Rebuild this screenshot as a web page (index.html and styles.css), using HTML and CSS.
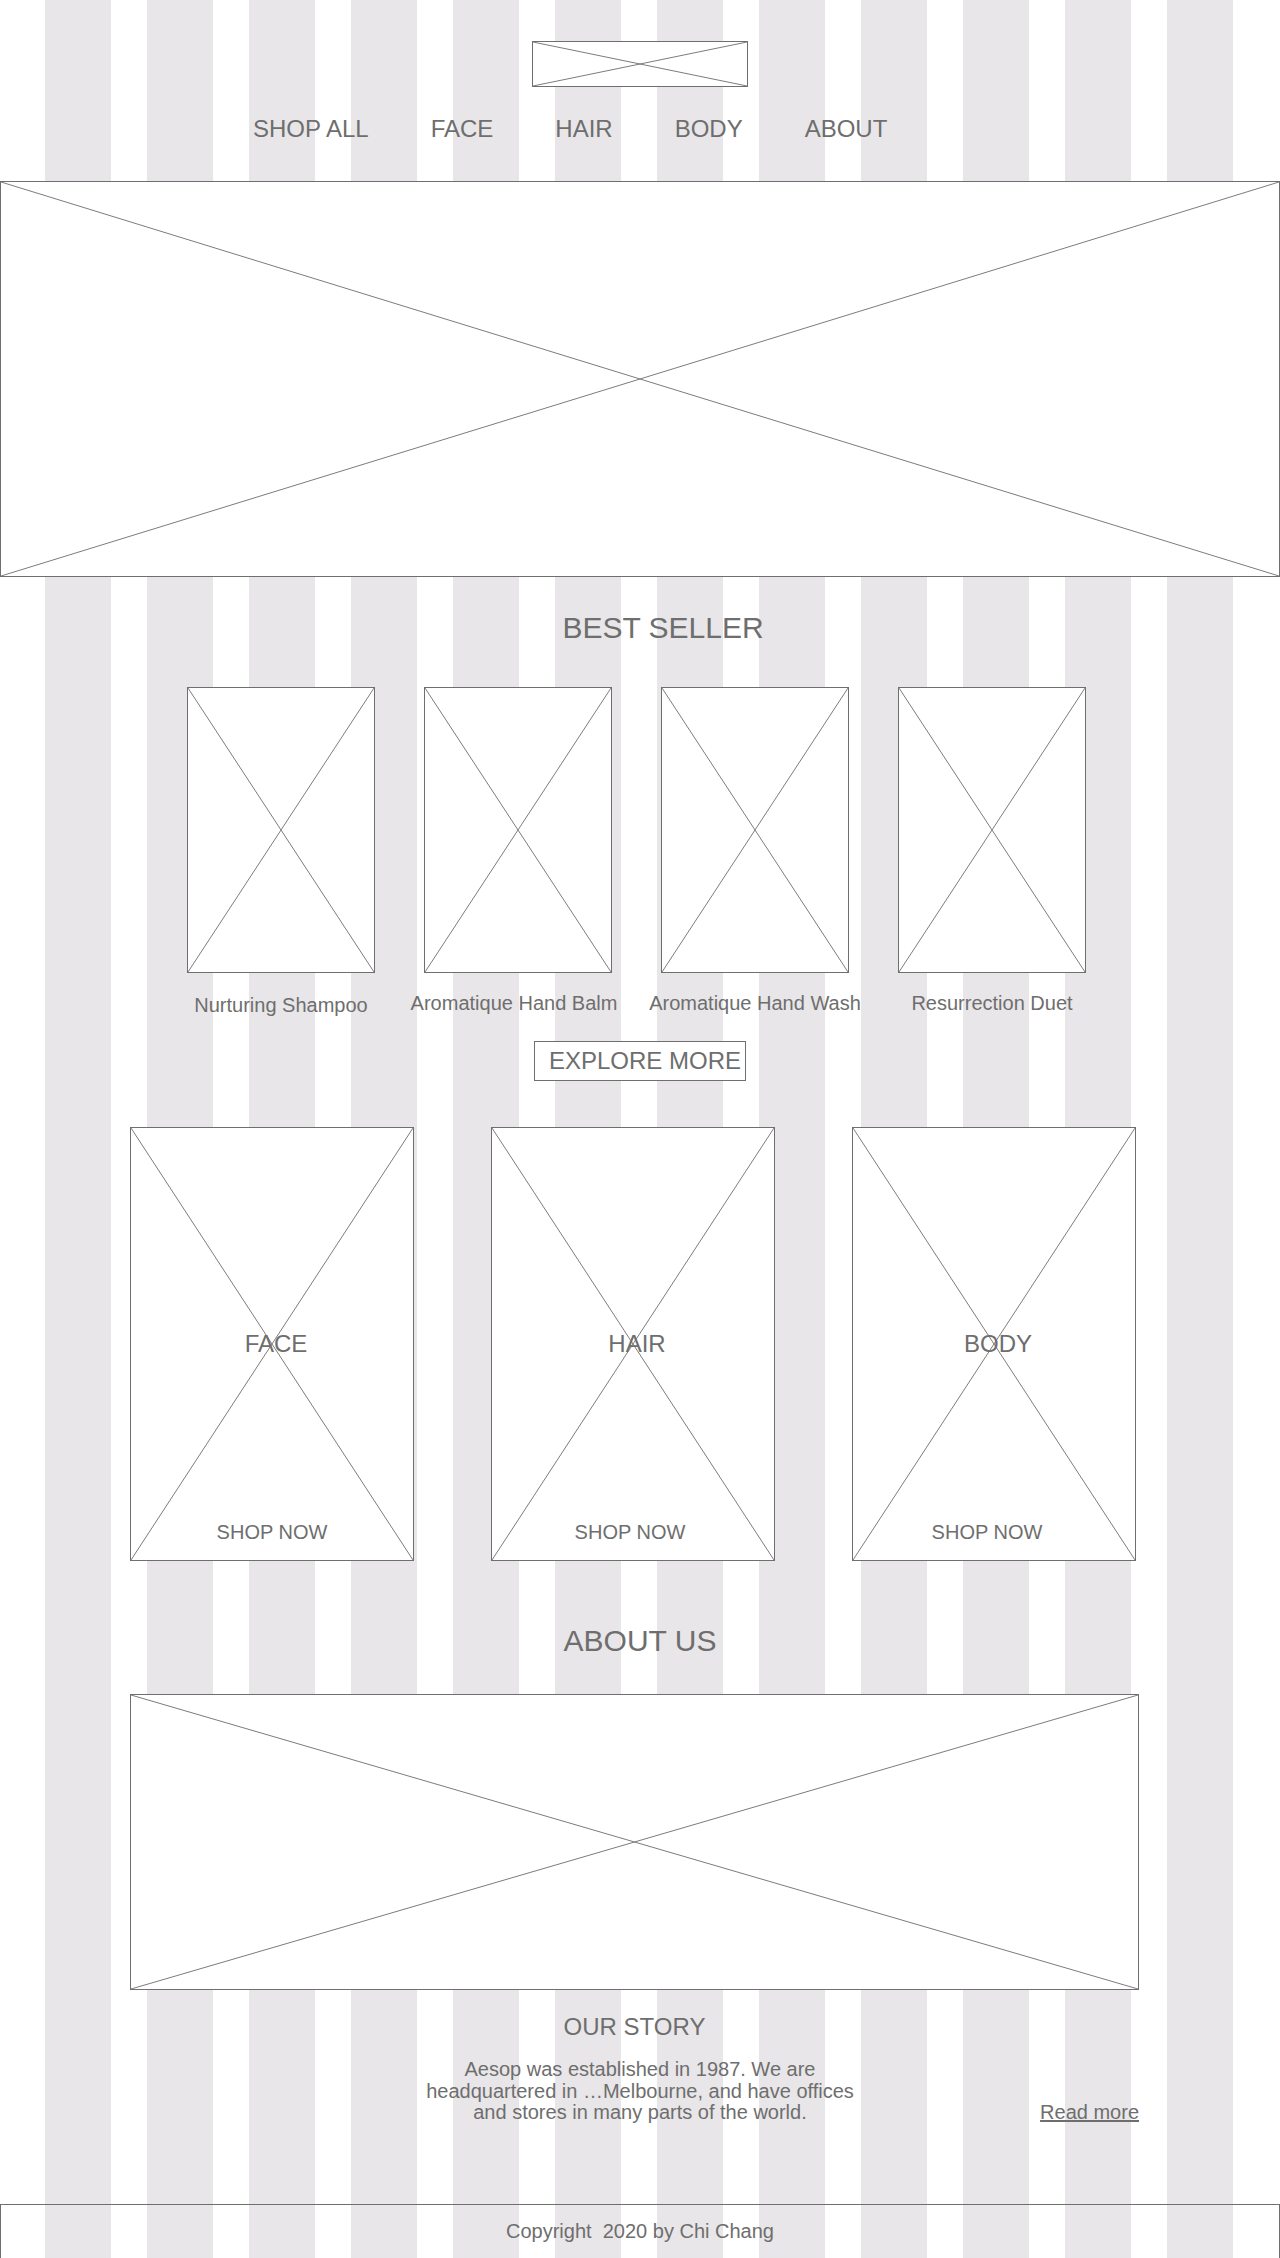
FILE: index.html
```html
<!DOCTYPE html>
<html lang="en">
<head>
  <meta charset="UTF-8">
  <title>Aesop Wireframe</title>
  <link rel="stylesheet" href="styles.css">
</head>
<body>
  <header class="site-header">
    <div class="ph logo">
      <svg class="x"><line x1="0" y1="0" x2="100%" y2="100%"/><line x1="0" y1="100%" x2="100%" y2="0"/></svg>
    </div>
    <nav class="main-nav">
      <a href="#">SHOP ALL</a>
      <a href="#">FACE</a>
      <a href="#">HAIR</a>
      <a href="#">BODY</a>
      <a href="#">ABOUT</a>
    </nav>
  </header>

  <div class="ph hero">
    <svg class="x"><line x1="0" y1="0" x2="100%" y2="100%"/><line x1="0" y1="100%" x2="100%" y2="0"/></svg>
  </div>

  <section class="best-seller">
    <h2 class="section-title best-title">BEST SELLER</h2>
    <div class="product-row">
      <div class="product">
        <div class="ph product-img">
          <svg class="x"><line x1="0" y1="0" x2="100%" y2="100%"/><line x1="0" y1="100%" x2="100%" y2="0"/></svg>
        </div>
        <p class="product-name low">Nurturing Shampoo</p>
      </div>
      <div class="product">
        <div class="ph product-img">
          <svg class="x"><line x1="0" y1="0" x2="100%" y2="100%"/><line x1="0" y1="100%" x2="100%" y2="0"/></svg>
        </div>
        <p class="product-name nudge-left">Aromatique Hand Balm</p>
      </div>
      <div class="product">
        <div class="ph product-img">
          <svg class="x"><line x1="0" y1="0" x2="100%" y2="100%"/><line x1="0" y1="100%" x2="100%" y2="0"/></svg>
        </div>
        <p class="product-name">Aromatique Hand Wash</p>
      </div>
      <div class="product">
        <div class="ph product-img">
          <svg class="x"><line x1="0" y1="0" x2="100%" y2="100%"/><line x1="0" y1="100%" x2="100%" y2="0"/></svg>
        </div>
        <p class="product-name">Resurrection Duet</p>
      </div>
    </div>
    <a href="#" class="explore-btn">EXPLORE MORE</a>
  </section>

  <section class="categories wrap">
    <div class="ph card">
      <svg class="x"><line x1="0" y1="0" x2="100%" y2="100%"/><line x1="0" y1="100%" x2="100%" y2="0"/></svg>
      <span class="card-title">FACE</span>
      <a href="#" class="card-link">SHOP NOW</a>
    </div>
    <div class="ph card">
      <svg class="x"><line x1="0" y1="0" x2="100%" y2="100%"/><line x1="0" y1="100%" x2="100%" y2="0"/></svg>
      <span class="card-title">HAIR</span>
      <a href="#" class="card-link shift-1">SHOP NOW</a>
    </div>
    <div class="ph card">
      <svg class="x"><line x1="0" y1="0" x2="100%" y2="100%"/><line x1="0" y1="100%" x2="100%" y2="0"/></svg>
      <span class="card-title">BODY</span>
      <a href="#" class="card-link shift-2">SHOP NOW</a>
    </div>
  </section>

  <section class="about">
    <h2 class="section-title about-title">ABOUT US</h2>
    <div class="wrap">
      <div class="ph about-img">
        <svg class="x"><line x1="0" y1="0" x2="100%" y2="100%"/><line x1="0" y1="100%" x2="100%" y2="0"/></svg>
      </div>
      <h3 class="story-title">OUR STORY</h3>
    </div>
    <div class="story-row">
      <p class="story-text">Aesop was established in 1987. We are headquartered in …Melbourne, and have offices and stores in many parts of the world.</p>
      <a href="#" class="read-more">Read more</a>
    </div>
  </section>

  <footer class="site-footer">Copyright&nbsp; 2020 by Chi Chang</footer>
</body>
</html>
```

FILE: styles.css
```css
html {
  background: #fff;
}
body {
  margin: 0;
  min-height: 2258px;
  font-family: 'Liberation Sans', Arial, sans-serif;
  color: #6e6e6e;
  background-image: repeating-linear-gradient(to right, #e8e6e8 0 66px, #fff 66px 102px);
  background-size: 1188px 100%;
  background-position: 45px 0;
  background-repeat: no-repeat;
}
a {
  color: #6e6e6e;
  text-decoration: none;
}
h2, h3, p {
  margin: 0;
  font-weight: normal;
}

/* placeholder boxes with the big X */
.ph {
  position: relative;
  box-sizing: border-box;
  border: 1px solid #6f6f6f;
  background: #fff;
}
.x {
  position: absolute;
  left: 0;
  top: 0;
  width: 100%;
  height: 100%;
}
.x line {
  stroke: #7c7c7c;
  stroke-width: 1;
}

.wrap {
  width: 1009px;
  margin-left: 130px;
}

/* header */
.site-header {
  padding-top: 41px;
}
.logo {
  width: 216px;
  height: 46px;
  margin: 0 auto;
  border-width: 1.5px;
}
.main-nav {
  display: flex;
  gap: 62px;
  margin: 28px 0 0 253px;
  font-size: 24px;
  line-height: 28px;
}

.hero {
  margin-top: 38px;
  height: 396px;
}

/* best seller */
.section-title {
  font-size: 30px;
  line-height: 34px;
  text-align: center;
}
.best-title {
  margin-top: 34px;
  padding-left: 46px;
}
.product-row {
  display: flex;
  gap: 49px;
  margin: 42px 0 0 187px;
}
.product {
  width: 188px;
}
.product-img {
  height: 286px;
}
.product-name {
  margin: 19px -30px 0 -30px;
  font-size: 20px;
  line-height: 23px;
  text-align: center;
  white-space: nowrap;
}
.product-name.low {
  margin-top: 21px;
}
.product-name.nudge-left {
  margin-left: -34px;
  margin-right: -26px;
}
.explore-btn {
  display: block;
  box-sizing: border-box;
  width: 212px;
  height: 40px;
  margin: 24px auto 0 auto;
  padding-left: 14px;
  border: 1px solid #6f6f6f;
  background: #fff;
  font-size: 24px;
  line-height: 38px;
}

/* categories */
.categories {
  display: flex;
  gap: 77px;
  margin-top: 46px;
}
.card {
  width: 284px;
  height: 434px;
  display: grid;
  grid-template-rows: 1fr auto 1fr;
  justify-items: center;
}
.card-title {
  position: relative;
  grid-row: 2;
  padding-left: 8px;
  font-size: 24px;
  line-height: 28px;
}
.card-link {
  position: relative;
  grid-row: 3;
  align-self: end;
  padding-bottom: 16px;
  font-size: 20px;
  line-height: 23px;
}
.card-link.shift-1 {
  margin-right: 6px;
}
.card-link.shift-2 {
  margin-right: 14px;
}

/* about */
.about-title {
  margin-top: 63px;
}
.about-img {
  margin-top: 36px;
  height: 296px;
}
.story-title {
  margin-top: 23px;
  font-size: 24px;
  line-height: 28px;
  text-align: center;
}
.story-row {
  display: grid;
  grid-template-columns: 1fr 432px 1fr;
  margin-top: 18px;
}
.story-text {
  grid-column: 2;
  font-size: 20px;
  line-height: 21.5px;
  text-align: center;
}
.read-more {
  grid-column: 3;
  justify-self: end;
  align-self: end;
  margin-right: 141px;
  font-size: 20px;
  line-height: 21.5px;
  text-decoration: underline;
}

/* footer */
.site-footer {
  margin-top: 80px;
  border: 1px solid #6f6f6f;
  padding: 15px 0;
  font-size: 20px;
  line-height: 23px;
  text-align: center;
}
```
